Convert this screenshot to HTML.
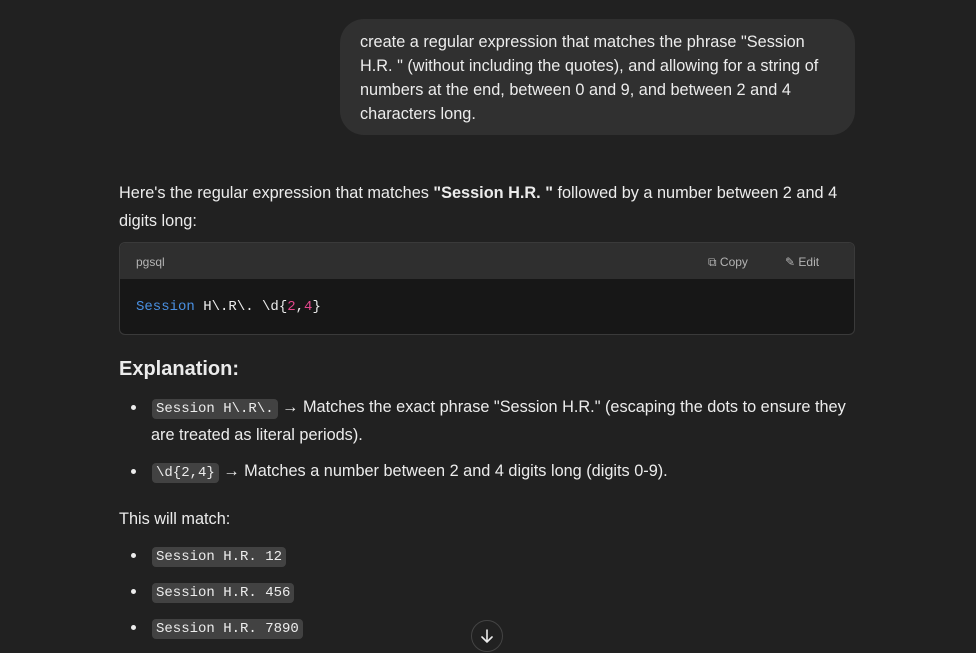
<!DOCTYPE html>
<html><head><meta charset="utf-8"><style>
*{margin:0;padding:0;box-sizing:border-box}
body{width:976px;height:653px;background:#212121;color:#ececec;font-family:"Liberation Sans",sans-serif;font-size:16.3px;position:relative;overflow:hidden}
.a{position:absolute;white-space:nowrap}
.bubble{position:absolute;left:340px;top:19px;width:515px;height:116px;background:#303030;border-radius:24px;padding:11px 24px 11px 20px;line-height:24px;white-space:normal}
code,.m{font-family:"Liberation Mono",monospace;font-size:14px}
.ic{background:#424242;border-radius:4px;padding:2px 4px;color:#ececec}
.cb{position:absolute;left:119px;top:242px;width:736px;height:93px;border:1px solid #3a3a3a;border-radius:6px;overflow:hidden;background:#171717}
.ch{height:36px;background:#2f2f2f;font-size:12px;color:#b4b4b4;position:relative}
.dot{position:absolute;width:5px;height:5px;border-radius:50%;background:#ececec}
</style></head><body>
<div class="bubble">create a regular expression that matches the phrase "Session H.R. " (without including the quotes), and allowing for a string of numbers at the end, between 0 and 9, and between 2 and 4 characters long.</div>

<div class="a" style="left:119px;top:183px;line-height:20px">Here's the regular expression that matches <b>"Session H.R. "</b> followed by a number between 2 and 4</div>
<div class="a" style="left:119px;top:211px;line-height:20px">digits long:</div>

<div class="cb">
 <div class="ch"><span class="a" style="left:16px;top:12px">pgsql</span>
 <span class="a" style="left:588px;top:12px">⧉ Copy</span>
 <span class="a" style="left:665px;top:12px">✎ Edit</span></div>
 <div class="a m" style="left:16px;top:56px;color:#ececec"><span style="color:#4a90e2">Session</span> H\.R\. \d{<span style="color:#e2468c">2</span>,<span style="color:#e2468c">4</span>}</div>
</div>

<div class="a" style="left:119px;top:358px;font-size:20px;font-weight:bold">Explanation:</div>

<div class="dot" style="left:131px;top:405px"></div>
<div class="a" style="left:152px;top:397px;line-height:20px"><code class="ic">Session H\.R\.</code> → Matches the exact phrase "Session H.R." (escaping the dots to ensure they</div>
<div class="a" style="left:151px;top:425px;line-height:20px">are treated as literal periods).</div>
<div class="dot" style="left:131px;top:469px"></div>
<div class="a" style="left:152px;top:461px;line-height:20px"><code class="ic">\d{2,4}</code> → Matches a number between 2 and 4 digits long (digits 0-9).</div>

<div class="a" style="left:119px;top:509px;line-height:20px">This will match:</div>
<div class="dot" style="left:131px;top:553px"></div>
<div class="a" style="left:152px;top:545px;line-height:20px"><code class="ic">Session H.R. 12</code></div>
<div class="dot" style="left:131px;top:589px"></div>
<div class="a" style="left:152px;top:581px;line-height:20px"><code class="ic">Session H.R. 456</code></div>
<div class="dot" style="left:131px;top:625px"></div>
<div class="a" style="left:152px;top:617px;line-height:20px"><code class="ic">Session H.R. 7890</code></div>

<div style="position:absolute;left:471px;top:620px;width:32px;height:32px;border-radius:50%;border:1px solid #444;background:#212121">
<svg width="30" height="30" viewBox="0 0 30 30" style="position:absolute;left:0;top:0"><path d="M15 9v12M10 16l5 5 5-5" stroke="#ececec" stroke-width="1.6" fill="none" stroke-linecap="round"/></svg></div>
</body></html>
